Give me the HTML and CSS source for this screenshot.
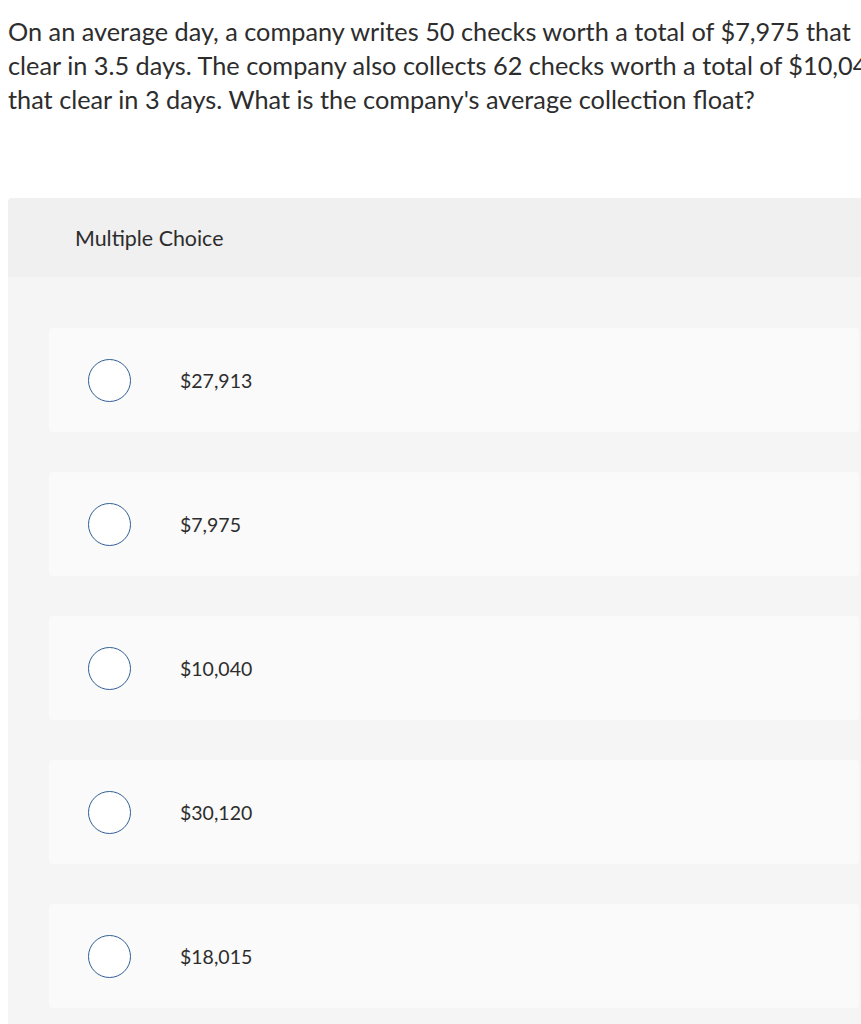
FILE: index.html
```html
<!DOCTYPE html>
<html>
<head>
<meta charset="utf-8">
<link rel="stylesheet" href="styles.css">
</head>
<body>
<div class="page">
  <p class="question">On an average day, a company writes 50 checks worth a total of $7,975 that clear in 3.5 days. The company also collects 62 checks worth a total of $10,040 that clear in 3 days. What is the company's average collection float?</p>
  <section class="panel">
    <div class="panel-head">Multiple Choice</div>
    <div class="panel-body">
      <div class="choice"><span class="radio"></span><span class="label">$27,913</span></div>
      <div class="choice"><span class="radio"></span><span class="label">$7,975</span></div>
      <div class="choice"><span class="radio"></span><span class="label">$10,040</span></div>
      <div class="choice"><span class="radio"></span><span class="label">$30,120</span></div>
      <div class="choice"><span class="radio"></span><span class="label">$18,015</span></div>
    </div>
  </section>
</div>
</body>
</html>
```
FILE: styles.css
```css
html, body {
  margin: 0;
  padding: 0;
  background: #ffffff;
  overflow: hidden;
}
body {
  font-family: Lato, "Liberation Sans", sans-serif;
  color: #2d2d2d;
}
.page {
  width: 892px;
  padding: 0 8px;
}
.question {
  margin: 0;
  width: 885px;
  padding-top: 14px;
  font-size: 25.3px;
  line-height: 34px;
  height: 184px;
}
.panel {
  border-radius: 4px 4px 0 0;
  overflow: hidden;
}
.panel-head {
  background: #f0f0f0;
  height: 79px;
  padding-left: 67px;
  display: flex;
  align-items: center;
  font-size: 21.4px;
}
.panel-body {
  background: #f5f5f5;
  padding: 51px 41px 40px;
  display: flex;
  flex-direction: column;
  gap: 40px;
}
.choice {
  background: #fafafa;
  border-radius: 4px;
  height: 104px;
  display: flex;
  align-items: center;
  padding-left: 39px;
}
.radio {
  width: 41px;
  height: 41px;
  border: 1.5px solid #2f5f93;
  border-radius: 50%;
  background: #ffffff;
  flex: none;
}
.label {
  margin-left: 49px;
  font-size: 19.5px;
}
```
